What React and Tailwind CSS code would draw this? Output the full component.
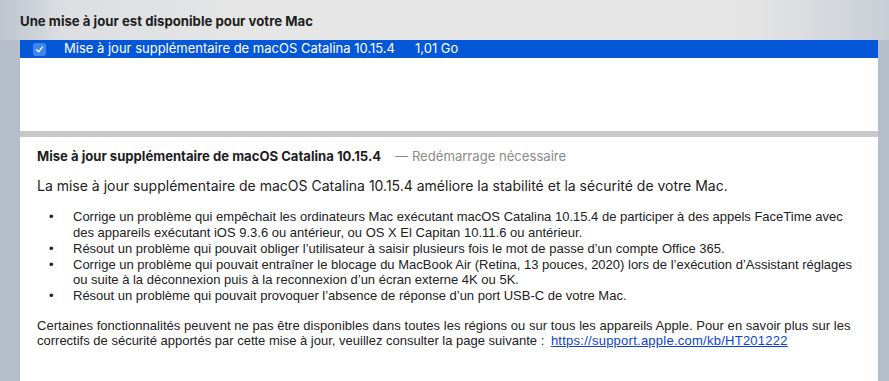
import React from "react";

const sf = { fontFamily: "Inter, 'Liberation Sans', sans-serif" };

function Check() {
  return (
    <div className="w-[13px] h-[13px] rounded-[3px] bg-[#3d84f4] flex items-center justify-center">
      <svg width="9" height="9" viewBox="0 0 10 10" fill="none">
        <path d="M1.8 5.3 L4 7.6 L8.3 2" stroke="white" strokeWidth="1.5" strokeLinecap="round" strokeLinejoin="round" />
      </svg>
    </div>
  );
}

const bullets = [
  [
    "Corrige un problème qui empêchait les ordinateurs Mac exécutant macOS Catalina 10.15.4 de participer à des appels FaceTime avec",
    "des appareils exécutant iOS 9.3.6 ou antérieur, ou OS X El Capitan 10.11.6 ou antérieur.",
  ],
  ["Résout un problème qui pouvait obliger l’utilisateur à saisir plusieurs fois le mot de passe d’un compte Office 365."],
  [
    "Corrige un problème qui pouvait entraîner le blocage du MacBook Air (Retina, 13 pouces, 2020) lors de l’exécution d’Assistant réglages",
    "ou suite à la déconnexion puis à la reconnexion d’un écran externe 4K ou 5K.",
  ],
  ["Résout un problème qui pouvait provoquer l’absence de réponse d’un port USB-C de votre Mac."],
];

export default function App() {
  return (
    <div className="w-[889px] h-[381px] overflow-hidden bg-[#b5beca] flex flex-col">
      <div className="h-[40px] shrink-0 bg-[linear-gradient(90deg,#bcc4cf_0%,#dcdee1_7%,#e6e6e6_30%,#e4e4e5_85%,#c9ced6_100%)] pl-[20px] pt-[13px]">
        <div className="text-[13.2px] font-bold text-[#1e1e1e] leading-[16px]" style={sf}>
          Une mise à jour est disponible pour votre Mac
        </div>
      </div>
      <div className="ml-[20px] mr-[11px] flex flex-col flex-1 bg-[#c7c8ca]">
        <div className="h-[91px] bg-white shrink-0">
          <div className="h-[18px] bg-[#0458d8] flex items-center text-white text-[13px]" style={sf}>
            <div className="w-[44px] pl-[13px]">
              <Check />
            </div>
            <div className="w-[351px] whitespace-nowrap">Mise à jour supplémentaire de macOS Catalina 10.15.4</div>
            <div className="whitespace-nowrap">1,01 Go</div>
          </div>
        </div>
        <div className="h-[6px] shrink-0" />
        <div className="flex-1 bg-white pl-[17px] pt-[12px] text-[13px] text-[#222] leading-[15.7px]" style={{ fontFamily: "'Liberation Sans', Arial, sans-serif" }}>
          <div className="flex items-baseline whitespace-nowrap text-[13.1px]" style={sf}>
            <span className="font-bold text-[#1e1e1e]">Mise à jour supplémentaire de macOS Catalina 10.15.4</span>
            <span className="ml-[14px] text-[#8b8b8b]">— Redémarrage nécessaire</span>
          </div>
          <div className="mt-[13px] whitespace-nowrap text-[14px]" style={sf}>
            La mise à jour supplémentaire de macOS Catalina 10.15.4 améliore la stabilité et la sécurité de votre Mac.
          </div>
          <div className="mt-[16px] flex flex-col">
            {bullets.map((b, i) => (
              <div key={i} className="flex">
                <div className="w-[36px] pl-[12px]">•</div>
                <div className="whitespace-nowrap">
                  {b.map((l, j) => (
                    <div key={j}>{l}</div>
                  ))}
                </div>
              </div>
            ))}
          </div>
          <div className="mt-[14px] whitespace-nowrap">
            <div className="tracking-[0.04px]">Certaines fonctionnalités peuvent ne pas être disponibles dans toutes les régions ou sur tous les appareils Apple. Pour en savoir plus sur les</div>
            <div>
              correctifs de sécurité apportés par cette mise à jour, veuillez consulter la page suivante :{" "}
              <span className="ml-[3px] text-[#0b3fd6] underline tracking-[0.25px]">https://support.apple.com/kb/HT201222</span>
            </div>
          </div>
        </div>
      </div>
    </div>
  );
}
